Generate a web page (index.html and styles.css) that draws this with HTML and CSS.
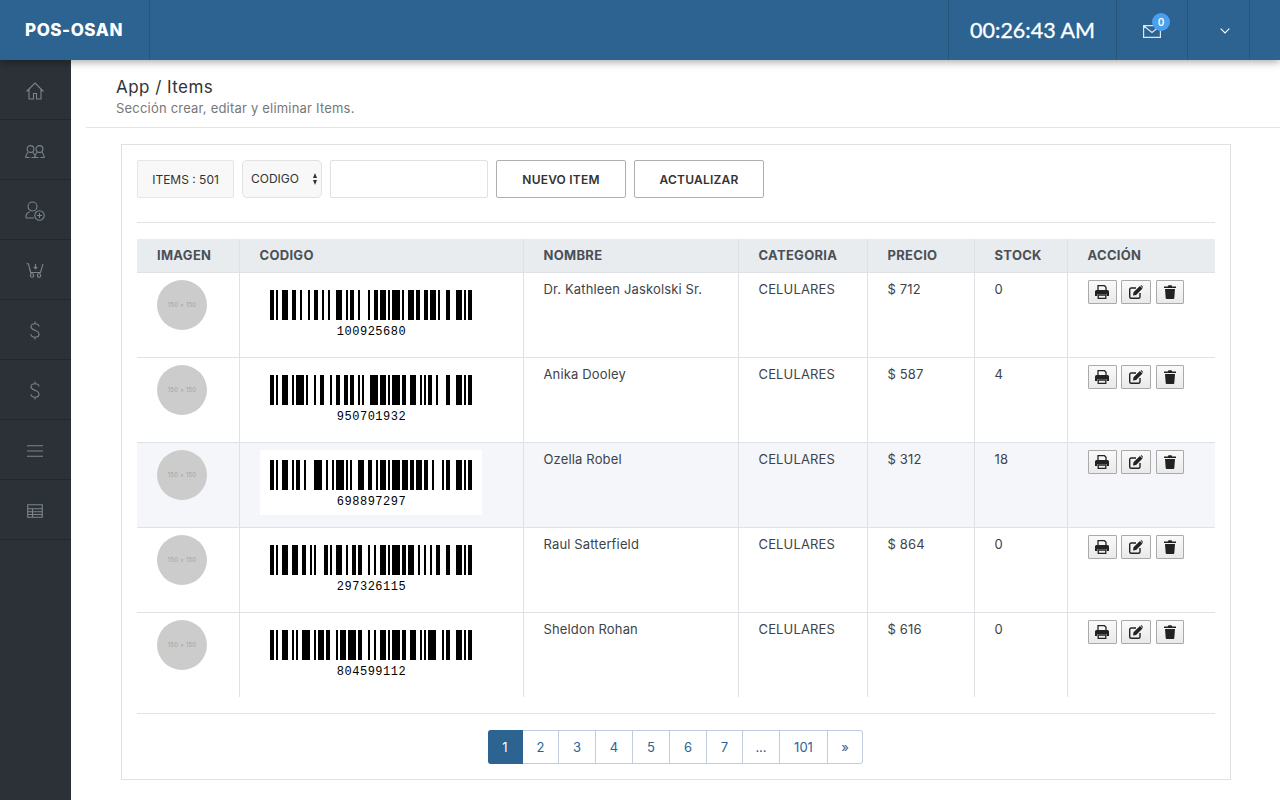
FILE: index.html
```html
<!DOCTYPE html>
<html lang="es">
<head>
    <meta charset="UTF-8">
    <title>POS-OSAN</title>
    <link rel="stylesheet" href="styles.css">
</head>
<body>
<header class="topbar">
    <div class="brand">POS-OSAN</div>
    <div class="topbar-space"></div>
    <div class="clock">00:26:43 AM</div>
    <div class="mail">
        <span class="mail-wrap">
            <svg class="mail-icon" viewBox="0 0 18 13" width="18" height="13"><path d="M.6.6h16.8v11.8H.6zM.6.8 9 7.4 17.4.8" fill="none" stroke="#fff" stroke-width="1.2"/></svg>
            <span class="badge">0</span>
        </span>
    </div>
    <div class="user-menu">
        <svg viewBox="0 0 10 6" width="10" height="6"><path d="M.7.7 5 5 9.3.7" fill="none" stroke="#fff" stroke-width="1.1"/></svg>
    </div>
    <div class="topbar-end"></div>
</header>
<div class="layout">
    <ul class="sidebar">
        <li><svg viewBox="0 0 20 20" width="20" height="20"><path d="M1.5 10.5 10 2l8.500 8.500M4 8.500V18h4.500v-5.500h3V18H16V8.500"/></svg></li>
        <li><svg class="ico-users" viewBox="0 0 20 13" width="20" height="13"><circle cx="5.500" cy="4" r="3.400"/><circle cx="14.500" cy="4" r="3.400"/><path d="M.6 12.500c0-2 1-3.500 2.600-5.500M10.400 12.500c0-2-1-3.500-2.600-5.500M9.600 12.500c0-2 1-3.500 2.600-5.500M19.400 12.500c0-2-1-3.500-2.600-5.500M.6 12.500h4M6.400 12.500h4M9.600 12.500h4M15.400 12.500h4"/></svg></li>
        <li><svg viewBox="0 0 20 20" width="20" height="20"><circle cx="7.500" cy="5.500" r="4.500"/><path d="M1 17v-1.500c0-2.500 2-4 3.800-4.700M10.500 10.800l1 .5M1 17h8"/><circle cx="14.500" cy="14.500" r="4.700"/><path d="M14.500 12v5M12 14.500h5"/></svg></li>
        <li><svg viewBox="0 0 18 15" width="18" height="15"><path d="M.5.8h2l2 8.700h10l2.500-8.700M3.200 4l1.800 6.500M9.500 1v4.500M7.700 3.800l1.800 1.900 1.800-1.900"/><circle cx="6" cy="12.500" r="1.700"/><circle cx="13" cy="12.500" r="1.700"/></svg></li>
        <li><svg viewBox="0 0 10 19" width="10" height="19"><path d="M9 5.500C9 3.500 7.200 2.800 5 2.800S1 3.800 1 5.700c0 4.300 8 2.800 8 7.500 0 2-1.800 3-4 3s-4-.9-4-3M5 .5v2.300M5 16.200v2.300"/></svg></li>
        <li><svg viewBox="0 0 10 19" width="10" height="19"><path d="M9 5.500C9 3.500 7.200 2.800 5 2.800S1 3.800 1 5.700c0 4.300 8 2.800 8 7.500 0 2-1.800 3-4 3s-4-.9-4-3M5 .5v2.300M5 16.200v2.300"/></svg></li>
        <li><svg viewBox="0 0 16 12" width="16" height="12"><path d="M0 .7h16M0 6h16M0 11.300h16"/></svg></li>
        <li><svg viewBox="0 0 16 14" width="16" height="14"><path d="M.7.7h14.600v12.600H.7zM.7 4.700h14.600M.7 7.700h14.600M.7 10.500h14.600M5.500 4.700v8.600"/></svg></li>
    </ul>
    <main class="main">
        <div class="page-head">
            <h1>App / Items</h1>
            <p>Sección crear, editar y eliminar Items.</p>
        </div>
        <section class="card">
            <div class="toolbar">
                <span class="count">ITEMS : 501</span>
                <span class="select-wrap">
                    <select class="select"><option>CODIGO</option></select>
                </span>
                <input class="search" type="text">
                <button class="btn btn-new">NUEVO ITEM</button>
                <button class="btn btn-update">ACTUALIZAR</button>
            </div>
            <table class="items">
                <thead>
                    <tr>
                        <th class="col-img">IMAGEN</th>
                        <th class="col-code">CODIGO</th>
                        <th class="col-name">NOMBRE</th>
                        <th class="col-cat">CATEGORIA</th>
                        <th class="col-price">PRECIO</th>
                        <th class="col-stock">STOCK</th>
                        <th class="col-act">ACCIÓN</th>
                    </tr>
                </thead>
                <tbody>
                    <tr>
                        <td><div class="thumb">150 × 150</div></td>
                        <td><div class="barcode"><svg data-code="100925680" width="202" height="30"></svg><div class="barcode-num">100925680</div></div></td>
                        <td>Dr. Kathleen Jaskolski Sr.</td>
                        <td>CELULARES</td>
                        <td>$ 712</td>
                        <td>0</td>
                        <td class="actions">
                            <button class="act act-print"><svg viewBox="0 0 14 14" width="14" height="14"><use href="#ico-print"/></svg></button>
                            <button class="act act-edit"><svg viewBox="0 0 14 14" width="14" height="14"><use href="#ico-edit"/></svg></button>
                            <button class="act act-del"><svg viewBox="0 0 12 14" width="12" height="14"><use href="#ico-del"/></svg></button>
                        </td>
                    </tr>
                    <tr>
                        <td><div class="thumb">150 × 150</div></td>
                        <td><div class="barcode"><svg data-code="950701932" width="202" height="30"></svg><div class="barcode-num">950701932</div></div></td>
                        <td>Anika Dooley</td>
                        <td>CELULARES</td>
                        <td>$ 587</td>
                        <td>4</td>
                        <td class="actions">
                            <button class="act act-print"><svg viewBox="0 0 14 14" width="14" height="14"><use href="#ico-print"/></svg></button>
                            <button class="act act-edit"><svg viewBox="0 0 14 14" width="14" height="14"><use href="#ico-edit"/></svg></button>
                            <button class="act act-del"><svg viewBox="0 0 12 14" width="12" height="14"><use href="#ico-del"/></svg></button>
                        </td>
                    </tr>
                    <tr class="hover">
                        <td><div class="thumb">150 × 150</div></td>
                        <td><div class="barcode"><svg data-code="698897297" width="202" height="30"></svg><div class="barcode-num">698897297</div></div></td>
                        <td>Ozella Robel</td>
                        <td>CELULARES</td>
                        <td>$ 312</td>
                        <td>18</td>
                        <td class="actions">
                            <button class="act act-print"><svg viewBox="0 0 14 14" width="14" height="14"><use href="#ico-print"/></svg></button>
                            <button class="act act-edit"><svg viewBox="0 0 14 14" width="14" height="14"><use href="#ico-edit"/></svg></button>
                            <button class="act act-del"><svg viewBox="0 0 12 14" width="12" height="14"><use href="#ico-del"/></svg></button>
                        </td>
                    </tr>
                    <tr>
                        <td><div class="thumb">150 × 150</div></td>
                        <td><div class="barcode"><svg data-code="297326115" width="202" height="30"></svg><div class="barcode-num">297326115</div></div></td>
                        <td>Raul Satterfield</td>
                        <td>CELULARES</td>
                        <td>$ 864</td>
                        <td>0</td>
                        <td class="actions">
                            <button class="act act-print"><svg viewBox="0 0 14 14" width="14" height="14"><use href="#ico-print"/></svg></button>
                            <button class="act act-edit"><svg viewBox="0 0 14 14" width="14" height="14"><use href="#ico-edit"/></svg></button>
                            <button class="act act-del"><svg viewBox="0 0 12 14" width="12" height="14"><use href="#ico-del"/></svg></button>
                        </td>
                    </tr>
                    <tr>
                        <td><div class="thumb">150 × 150</div></td>
                        <td><div class="barcode"><svg data-code="804599112" width="202" height="30"></svg><div class="barcode-num">804599112</div></div></td>
                        <td>Sheldon Rohan</td>
                        <td>CELULARES</td>
                        <td>$ 616</td>
                        <td>0</td>
                        <td class="actions">
                            <button class="act act-print"><svg viewBox="0 0 14 14" width="14" height="14"><use href="#ico-print"/></svg></button>
                            <button class="act act-edit"><svg viewBox="0 0 14 14" width="14" height="14"><use href="#ico-edit"/></svg></button>
                            <button class="act act-del"><svg viewBox="0 0 12 14" width="12" height="14"><use href="#ico-del"/></svg></button>
                        </td>
                    </tr>
                </tbody>
            </table>
            <div class="pager-wrap">
                <ul class="pager">
                    <li class="selected">1</li>
                    <li class="p-s">2</li>
                    <li>3</li>
                    <li>4</li>
                    <li>5</li>
                    <li>6</li>
                    <li class="p-s">7</li>
                    <li>...</li>
                    <li class="p-w">101</li>
                    <li class="p-l">»</li>
                </ul>
            </div>
        </section>
    </main>
</div>
<svg class="sprites" width="0" height="0">
    <symbol id="ico-print" viewBox="0 0 14 14">
        <path d="M3 5.500V.7h6.500L11 2.200v3.300M3.200 10h7.600v3.300H3.200z" fill="none" stroke="#222" stroke-width="1.300"/>
        <path d="M1.500 5h11A1.500 1.500 0 0 1 14 6.500V11h-2.300V9H2.300v2H0V6.500A1.500 1.500 0 0 1 1.500 5z" fill="#222"/>
    </symbol>
    <symbol id="ico-edit" viewBox="0 0 14 14">
        <path d="M7 3H2.200A1.500 1.500 0 0 0 .7 4.500v7.300a1.500 1.500 0 0 0 1.500 1.500h7.300a1.500 1.500 0 0 0 1.500-1.500V8" fill="none" stroke="#222" stroke-width="1.400"/>
        <path d="M4.500 7.300 10.900 1l2.600 2.600-6.400 6.300-3.100.5zM11.600.3l.6-.3 1.600 1.600-.1.900-.3.400z" fill="#222"/>
    </symbol>
    <symbol id="ico-del" viewBox="0 0 12 14">
        <path d="M0 1.500h3.800L4.500.3h3l.7 1.200H12v1.600H0zM1 4h10l-.7 9a1 1 0 0 1-1 1H2.700a1 1 0 0 1-1-1z" fill="#222"/>
    </symbol>
</svg>
<script src="barcode.js"></script>
</body>
</html>
```
FILE: styles.css
```css
*{
    margin: 0;
    padding: 0;
    box-sizing: border-box;
}
ul{
    list-style: none;
}
body{
    height: 100vh;
    display: flex;
    flex-direction: column;
    font-family: "Inter", "Liberation Sans", sans-serif;
    font-size: 13px;
    color: #3e4349;
    background: #fff;
    overflow: hidden;
}
.topbar{
    height: 60px;
    flex: none;
    display: flex;
    background: #2c6391;
    color: #fff;
    box-shadow: 0 2px 8px rgba(0,0,0,.35);
    position: relative;
    z-index: 2;
}
.topbar > div{
    border-right: 1px solid #275678;
}
.brand{
    width: 150px;
    padding-left: 25px;
    font-size: 17px;
    font-weight: 800;
    line-height: 60px;
    letter-spacing: .55px;
}
.topbar-space{
    flex: 1;
}
.clock{
    width: 168px;
    text-align: center;
    font-family: "Lato", sans-serif;
    font-size: 21.5px;
    line-height: 61px;
    -webkit-text-stroke: .3px #fff;
}
.mail{
    width: 71px;
    display: flex;
    align-items: center;
    justify-content: center;
}
.mail-wrap{
    display: block;
    position: relative;
    width: 18px;
    height: 13px;
    margin-top: 2px;
}
.mail-icon{
    display: block;
    opacity: .85;
}
.badge{
    position: absolute;
    left: 9px;
    top: -12px;
    width: 18px;
    height: 18px;
    border-radius: 50%;
    background: #4a9ff0;
    color: #fff;
    font-size: 10px;
    font-weight: 600;
    line-height: 18px;
    text-align: center;
}
.user-menu{
    width: 62px;
    display: flex;
    align-items: center;
    justify-content: center;
    padding: 2px 0 0 12px;
}
.topbar > .topbar-end{
    width: 30px;
    border-right: 0;
}
.layout{
    flex: 1;
    display: flex;
    min-height: 0;
}
.sidebar{
    width: 71px;
    flex: none;
    background: #2b3136;
}
.sidebar li{
    height: 60px;
    display: flex;
    align-items: center;
    justify-content: center;
    padding: 2px 1px 0 0;
    border-bottom: 1px solid #22272b;
}
.sidebar svg{
    fill: none;
    stroke: #7b858d;
    stroke-width: 1.1;
}
.sidebar .ico-users{
    margin-top: 2px;
}
.main{
    flex: 1;
    min-width: 0;
    padding-left: 15px;
}
.page-head{
    height: 68px;
    padding: 17px 0 0 30px;
    border-bottom: 1px solid #e1e3e5;
}
.page-head h1{
    font-size: 17px;
    font-weight: 400;
    line-height: 20px;
    letter-spacing: .45px;
    color: #333;
}
.page-head p{
    font-size: 13px;
    line-height: 20px;
    margin-top: 1px;
    letter-spacing: .2px;
    color: #777;
}
.card{
    width: 1110px;
    height: 636px;
    margin: 16px 0 0 35px;
    padding: 15px;
    border: 1px solid #dfe1e3;
}
.toolbar{
    display: flex;
    gap: 8px;
    height: 63px;
    border-bottom: 1px solid #e1e3e5;
}
.count{
    width: 97px;
    height: 38px;
    background: #f8f8f8;
    border: 1px solid #e4e6e8;
    border-radius: 2px;
    text-align: center;
    font-size: 12px;
    line-height: 37px;
    color: #333;
}
.select-wrap{
    width: 80px;
    height: 38px;
    position: relative;
}
.select-wrap::before,.select-wrap::after{
    content: "";
    position: absolute;
    right: 5px;
    border-left: 2.500px solid transparent;
    border-right: 2.500px solid transparent;
    pointer-events: none;
}
.select-wrap::before{
    top: 13px;
    border-bottom: 5px solid #333;
}
.select-wrap::after{
    top: 20px;
    border-top: 5px solid #333;
}
.select{
    appearance: none;
    width: 100%;
    height: 100%;
    padding: 0 0 1px 8px;
    background: #f8f8f8;
    border: 1px solid #e0e2e4;
    border-radius: 5px;
    font-family: inherit;
    font-size: 12px;
    color: #333;
}
.search{
    width: 158px;
    height: 38px;
    border: 1px solid #dfe1e3;
    border-radius: 2px;
}
.btn{
    height: 38px;
    background: #fff;
    border: 1px solid #adb0b3;
    border-radius: 2px;
    font-family: inherit;
    font-size: 12px;
    font-weight: 600;
    letter-spacing: .2px;
    color: #333;
}
.btn-new{
    width: 130px;
}
.btn-update{
    width: 130px;
}
.items{
    width: 1078px;
    margin-top: 16px;
    border-collapse: collapse;
    table-layout: fixed;
}
.col-img{
    width: 102px;
}
.col-code{
    width: 284px;
}
.col-name{
    width: 215px;
}
.col-cat{
    width: 129px;
}
.col-price{
    width: 107px;
}
.col-stock{
    width: 93px;
}
.items th{
    height: 33px;
    padding: 0 20px;
    background: #e9ecef;
    border-right: 1px solid #dee2e6;
    border-bottom: 1px solid #dee2e6;
    text-align: left;
    font-size: 13px;
    font-weight: 700;
    letter-spacing: .3px;
    color: #495057;
}
.items td{
    height: 85px;
    padding: 7px 19px 0 20px;
    vertical-align: top;
    border-right: 1px solid #dee2e6;
    border-bottom: 1px solid #dee2e6;
    line-height: 19px;
    letter-spacing: .15px;
    color: #3e4349;
}
.items th:last-child,.items td:last-child{
    border-right: 0;
}
.items tbody tr:last-child td{
    border-bottom: 0;
}
.items .hover td{
    background: #f4f6f9;
}
.thumb{
    width: 50px;
    height: 50px;
    border-radius: 50%;
    background: #ccc;
    color: #a3a3a3;
    font-size: 6px;
    line-height: 50px;
    text-align: center;
}
.barcode{
    width: 222px;
    height: 65px;
    padding: 10px 0 0 10px;
    background: #fff;
}
.barcode svg{
    display: block;
}
.barcode-num{
    width: 202px;
    margin-top: 5px;
    padding-left: 2px;
    font-family: "Liberation Mono", "DejaVu Sans Mono", monospace;
    font-size: 12px;
    line-height: 14px;
    letter-spacing: .5px;
    text-align: center;
    color: #000;
}
.actions{
    white-space: nowrap;
}
.act{
    display: inline-flex;
    align-items: center;
    justify-content: center;
    height: 24px;
    margin-right: 1px;
    vertical-align: top;
    background: linear-gradient(#fafafa,#e9e9e9);
    border: 1px solid #aaa;
    border-radius: 1px;
}
.act-print{
    width: 29px;
}
.act-edit{
    width: 30px;
}
.act-del{
    width: 28px;
}
.pager-wrap{
    display: flex;
    justify-content: center;
    margin-top: 16px;
    padding-top: 16px;
    border-top: 1px solid #e1e3e5;
}
.pager{
    display: flex;
    height: 34px;
    margin-right: 1px;
    font-size: 13px;
    line-height: 32px;
    text-align: center;
    color: #2c6391;
}
.pager li{
    width: 37px;
    border: 1px solid #c3cbe0;
    border-left: 0;
}
.pager li.selected{
    width: 35px;
    background: #2c6391;
    border-color: #2c6391;
    color: #fff;
    border-radius: 3px 0 0 3px;
}
.pager .p-s{
    width: 36px;
}
.pager .p-w{
    width: 48px;
}
.pager .p-l{
    width: 35px;
    border-radius: 0 3px 3px 0;
}
.sprites{
    position: absolute;
}
```
FILE: barcode.js
```js
// code128 patterns, value = index
var aPat = ('212222 222122 222221 121223 121322 131222 122213 122312 132212 221213 221312 231212 ' +
    '112232 122132 122231 113222 123122 123221 223211 221132 221231 213212 223112 312131 ' +
    '311222 321122 321221 312212 322112 322211 212123 212321 232121 111323 131123 131321 ' +
    '112313 132113 132311 211313 231113 231311 112133 112331 132131 113123 113321 133121 ' +
    '313121 211331 231131 213113 213311 213131 311123 311321 331121 312113 312311 332111 ' +
    '314111 221411 431111 111224 111422 121124 121421 141122 141221 112214 112412 122114 ' +
    '122411 142112 142211 241211 221114 413111 241112 134111 111242 121142 121241 114212 ' +
    '124112 124211 411212 421112 421211 212141 214121 412121 111143 111341 131141 114113 ' +
    '114311 411113 411311 113141 114131 311141 411131 211412 211214 211232 2331112').split(' ');

// start C, digit pairs, switch to A for the odd digit, checksum, stop
function encode(sCode){
    var aVal = [105];
    var i = 0;
    for(; i + 1 < sCode.length; i += 2){
        aVal.push(parseInt(sCode.substr(i, 2), 10));
    }
    if(i < sCode.length){
        aVal.push(101);
        aVal.push(parseInt(sCode.charAt(i), 10) + 16);
    }
    var iSum = aVal[0];
    for(var j = 1; j < aVal.length; j++){
        iSum += j * aVal[j];
    }
    aVal.push(iSum % 103);
    aVal.push(106);
    return aVal;
}

var aSvg = document.querySelectorAll('svg[data-code]');
for(var n = 0; n < aSvg.length; n++){
    var aVal = encode(aSvg[n].getAttribute('data-code'));
    var iX = 0;
    var sHtml = '';
    for(var k = 0; k < aVal.length; k++){
        var sPat = aPat[aVal[k]];
        for(var m = 0; m < sPat.length; m++){
            var iW = parseInt(sPat.charAt(m), 10) * 2;
            if(m % 2 == 0){
                sHtml += '<rect x="' + iX + '" y="0" width="' + iW + '" height="30"></rect>';
            }
            iX += iW;
        }
    }
    aSvg[n].innerHTML = sHtml;
}
```
